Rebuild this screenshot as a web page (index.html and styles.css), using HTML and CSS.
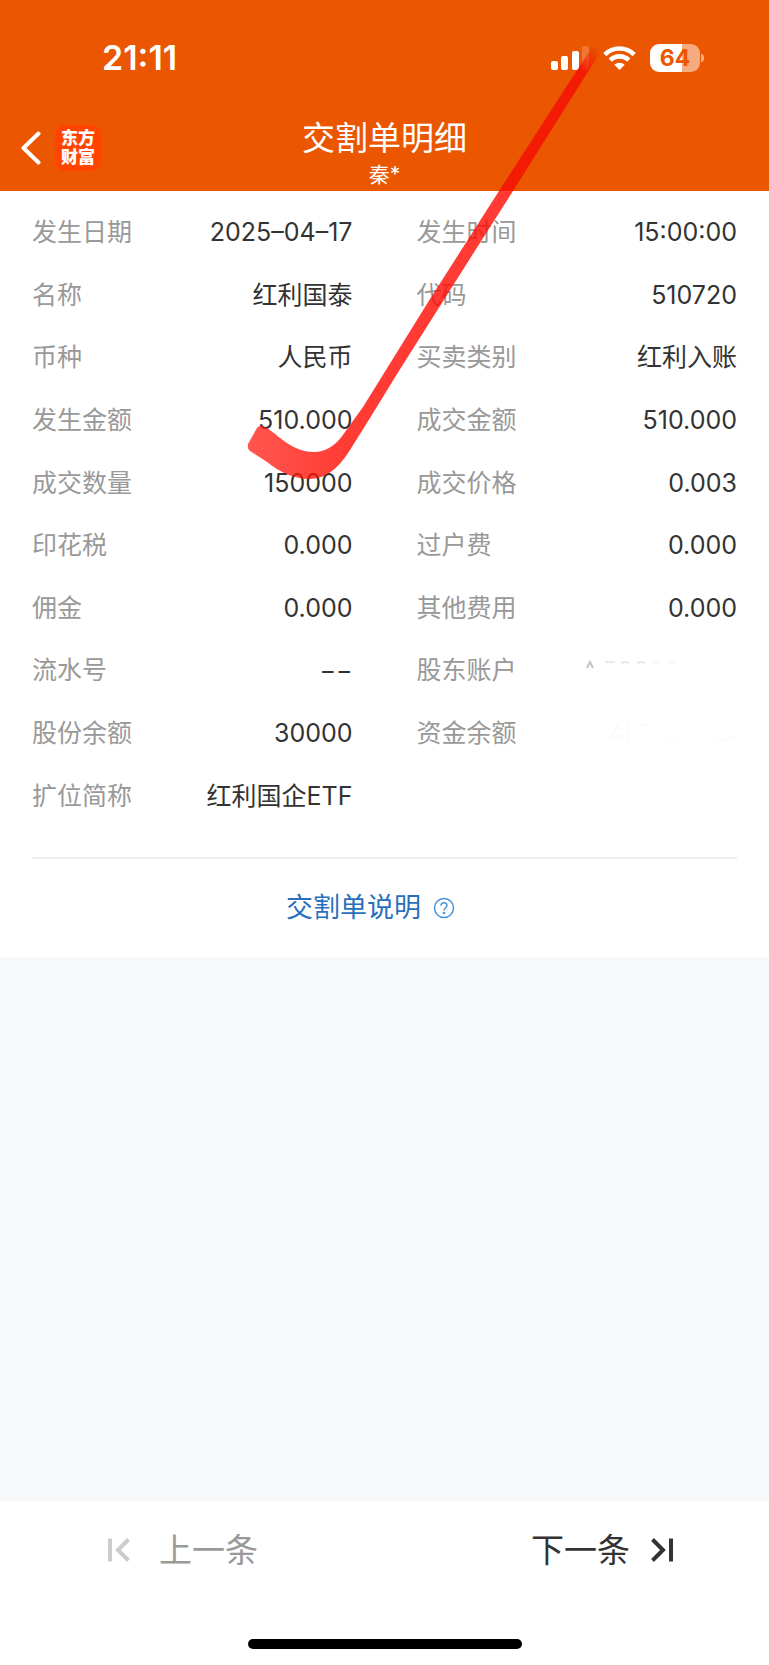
FILE: index.html
```html
<!DOCTYPE html>
<html lang="zh-CN">
<head>
  <meta charset="UTF-8">
  <meta name="viewport" content="width=device-width, initial-scale=1">
  <title>交割单明细</title>
  <link rel="stylesheet" href="styles.css">
</head>
<body>
<header>
  <div class="status">
    <span class="time">21:11</span>
    <div class="status-icons">
      <svg class="signal" width="38" height="24" viewBox="0 0 38 24" fill="#fff">
        <rect x="0" y="15" width="7" height="9" rx="2"/>
        <rect x="10" y="10" width="7" height="14" rx="2"/>
        <rect x="21" y="5" width="7" height="19" rx="2"/>
        <rect x="31" y="0" width="7" height="24" rx="2" opacity=".2"/>
      </svg>
      <svg class="wifi" width="33" height="24" viewBox="0 0 33 24" fill="none" stroke="#fff" stroke-width="4.6">
        <path d="M1.8 8.6A20.8 20.8 0 0 1 31.2 8.6"/>
        <path d="M7.2 14.2A13.1 13.1 0 0 1 25.8 14.2"/>
        <path d="M16.5 24L11.3 18.8A7.4 7.4 0 0 1 21.7 18.8Z" fill="#fff" stroke="none"/>
      </svg>
      <div class="battery"><span>64</span></div>
    </div>
  </div>
  <nav>
    <div class="nav-left">
      <button class="back" aria-label="返回">
        <svg width="20" height="34" viewBox="0 0 20 34" fill="none" stroke="#fff" stroke-width="4" stroke-linecap="round" stroke-linejoin="round">
          <path d="M17.5 2.5L2.5 17L17.5 31.5"/>
        </svg>
      </button>
      <a class="logo" href="#">东方<br>财富</a>
    </div>
    <div class="title">
      <h1>交割单明细</h1>
      <p>秦*</p>
    </div>
  </nav>
</header>

<main>
  <dl class="detail">
    <div><dt>发生日期</dt><dd>2025–04–17</dd></div>
    <div><dt>发生时间</dt><dd>15:00:00</dd></div>
    <div><dt>名称</dt><dd>红利国泰</dd></div>
    <div><dt>代码</dt><dd>510720</dd></div>
    <div><dt>币种</dt><dd>人民币</dd></div>
    <div><dt>买卖类别</dt><dd>红利入账</dd></div>
    <div><dt>发生金额</dt><dd>510.000</dd></div>
    <div><dt>成交金额</dt><dd>510.000</dd></div>
    <div><dt>成交数量</dt><dd>150000</dd></div>
    <div><dt>成交价格</dt><dd>0.003</dd></div>
    <div><dt>印花税</dt><dd>0.000</dd></div>
    <div><dt>过户费</dt><dd>0.000</dd></div>
    <div><dt>佣金</dt><dd>0.000</dd></div>
    <div><dt>其他费用</dt><dd>0.000</dd></div>
    <div><dt>流水号</dt><dd>−−</dd></div>
    <div>
      <dt>股东账户</dt>
      <dd>
        <!-- erased value, only faint traces left -->
        <svg width="152" height="20" viewBox="0 0 152 20" fill="none" stroke="#e9e9e9" stroke-width="2">
          <path d="M2 8L5 2L8 8" stroke="#c4c4c4"/>
          <path d="M20 2H30M36 3Q40 1 44 3M52 3Q56 1 60 3"/>
          <path d="M68 3Q72 1 76 3M84 3Q88 1 92 3" stroke="#f8f8f8"/>
        </svg>
      </dd>
    </div>
    <div><dt>股份余额</dt><dd>30000</dd></div>
    <div>
      <dt>资金余额</dt>
      <dd>
        <svg width="128" height="20" viewBox="0 0 128 20" fill="none" stroke="#fafafa" stroke-width="2">
          <path d="M10 1L2 13H14M19 2V19M30 2H38M60 17H66M108 17H116M120 14Q124 20 127 12"/>
        </svg>
      </dd>
    </div>
    <div><dt>扩位简称</dt><dd>红利国企ETF</dd></div>
  </dl>
  <a class="explain" href="#">
    交割单说明
    <svg width="22" height="22" viewBox="0 0 22 22" fill="none" stroke="#4a90dd" stroke-width="1.5">
      <circle cx="11" cy="11" r="9.5"/>
      <path d="M8 8.8C8 4.6 14 4.8 14 8.5C14 10.8 11 10.8 11 13.4"/>
      <circle cx="11" cy="16" r=".6"/>
    </svg>
  </a>
</main>

<footer>
  <div class="pager">
    <button class="prev" disabled>
      <svg width="22" height="24" viewBox="0 0 22 24" fill="none" stroke="#ccc" stroke-width="4">
        <path d="M2 0.5V23.5M20.5 1.5L10 12L20.5 22.5"/>
      </svg>
      上一条
    </button>
    <button class="next">
      下一条
      <svg width="22" height="24" viewBox="0 0 22 24" fill="none" stroke="#333" stroke-width="4">
        <path d="M20 0.5V23.5M1.5 1.5L12 12L1.5 22.5"/>
      </svg>
    </button>
  </div>
  <div class="home-bar"></div>
</footer>

<!-- marker tick drawn over the page -->
<svg class="tick" width="360" height="440" viewBox="245 45 360 440">
  <defs>
    <linearGradient id="ink" gradientUnits="userSpaceOnUse" x1="597" y1="46" x2="583" y2="70">
      <stop offset="0" stop-color="#f50c04" stop-opacity="0"/>
      <stop offset="1" stop-color="#f50c04" stop-opacity=".8"/>
    </linearGradient>
    <linearGradient id="body" gradientUnits="userSpaceOnUse" x1="250" y1="440" x2="350" y2="440">
      <stop offset="0" stop-color="#ff1a10" stop-opacity=".74"/>
      <stop offset="1" stop-color="#ff0a00" stop-opacity=".8"/>
    </linearGradient>
  </defs>
  <path fill="url(#ink)" d="M592 47Q600 43 601 51L513 191H499Z"/>
  <path fill="url(#body)" d="M499 191H513L471 257L397 374L370 418L350 450Q332 479 310 479Q288 479 267 462L250 451Q247 449 248 444L257 428Q260 424 265 427C278 434 291 452 314 452Q332 452 345 432L363 407L430 299Z"/>
</svg>
</body>
</html>
```

FILE: styles.css
```css
* { box-sizing: border-box; }
body { margin: 0; min-height: 100vh; display: flex; flex-direction: column;
  position: relative; background: #f6f8fa; color: #333;
  font-family: Inter, "Noto Sans CJK SC", sans-serif; font-size: 25px; line-height: 40px; }
h1, p, dl, dd { margin: 0; }
button { padding: 0; border: none; background: none; font: inherit; color: inherit; cursor: pointer; }
a { text-decoration: none; }
svg { display: block; flex: none; }

header { background: #eb5600; color: #fff; }
.status { display: flex; justify-content: space-between; align-items: center;
  height: 115px; padding: 0 65px 0 102px; }
.time { font-size: 34px; font-weight: 600; }
.status-icons { display: flex; align-items: center; }
.wifi { margin: 0 14px; }
.battery { position: relative; width: 50px; height: 28px; border-radius: 9px;
  background: linear-gradient(to right, #fff 64%, #f6aa80 64%);
  color: #eb5600; font-size: 23px; font-weight: 700; line-height: 28px; text-align: center;
  margin-right: 4px; }
.battery::after { content: ""; position: absolute; right: -4px; top: 10px;
  width: 3px; height: 8px; border-radius: 0 4px 4px 0; background: #f6aa80; }

nav { display: grid; grid-template-columns: 1fr auto 1fr; padding: 0 21px 2px; }
.nav-left { display: flex; align-items: center; gap: 14px; margin-bottom: 8px; }
.logo { width: 46px; height: 46px; padding-top: 4px; border-radius: 9px;
  background: #ff4400; color: #fff; font-size: 17px; font-weight: 900;
  line-height: 19px; text-align: center; }
.title { text-align: center; }
h1  { font-size: 33px; font-weight: 400; line-height: 46px; }
.title p { font-size: 21px; line-height: 28px; }

main { background: #fff; padding: 10px 32px 0; }
.detail { display: grid; grid-template-columns: 1fr 1fr; grid-auto-rows: 1fr;
  column-gap: 64px; min-height: 626px; }
.detail div { display: flex; justify-content: space-between; align-items: center; }
dt { color: #999; }
.explain { display: flex; justify-content: center; align-items: center; gap: 12px;
  height: 100px; margin-top: 30px; padding-right: 28px;
  border-top: 2px solid #eee; color: #2a6fbd; font-size: 27px; }

footer { margin-top: auto; background: #fff; padding-bottom: 16px; }
.pager { display: flex; justify-content: space-between; padding: 0 96px 0 108px; }
.pager button { display: flex; align-items: center; height: 98px; font-size: 33px; }
.prev { gap: 29px; color: #999; }
.next { gap: 21px; }
.home-bar { width: 274px; height: 10px; margin: 40px auto 0; border-radius: 5px; background: #000; }

.tick { position: absolute; left: 245px; top: 45px; pointer-events: none; }
```
